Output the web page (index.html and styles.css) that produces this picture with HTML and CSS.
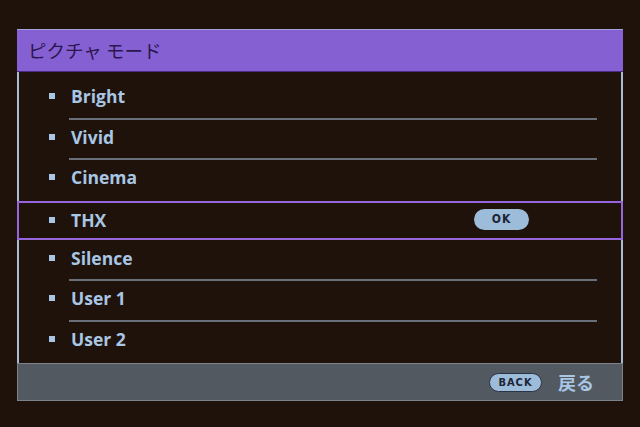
FILE: index.html
```html
<!DOCTYPE html>
<html>
<head>
  <title>ピクチャ モード</title>
  <meta charset="utf-8">
  <link rel="stylesheet" href="styles.css">
</head>
<body>
  <div class="panel">

    <div class="header">ピクチャ モード</div>

    <div class="list">
      <div class="row"><span class="dot"></span><span class="label">Bright</span></div>
      <div class="row"><span class="dot"></span><span class="label">Vivid</span></div>
      <div class="row plain"><span class="dot"></span><span class="label">Cinema</span></div>
      <div class="row selected"><span class="dot"></span><span class="label">THX</span><span class="pill ok">OK</span></div>
      <div class="row"><span class="dot"></span><span class="label">Silence</span></div>
      <div class="row"><span class="dot"></span><span class="label">User 1</span></div>
      <div class="row plain"><span class="dot"></span><span class="label">User 2</span></div>
    </div>

    <div class="footer">
      <span class="pill back">BACK</span>
      <span class="back-text">戻る</span>
    </div>

  </div>
</body>
</html>
```

FILE: styles.css
```css
body {
  margin: 0;
  background: #1e120b;
  font-family: "Open Sans", "Noto Sans", sans-serif;
}
.panel {
  margin: 29px 0 0 17px;
  width: 606px;
}
.header {
  height: 41px;
  border-top: 1px solid #a9a2d6;
  border-bottom: 1px solid #4a2c86;
  background: #8560d2;
  color: #2b1650;
  font-family: "Noto Sans CJK JP", sans-serif;
  font-size: 18.5px;
  line-height: 41px;
  padding-left: 11px;
}
.list {
  height: 284px;
  padding-top: 7px;
  border-left: 2px solid #a9bdd2;
  border-right: 2px solid #a9bdd2;
}
.row {
  box-sizing: border-box;
  height: 40.6px;
  margin: 0 24px 0 50px;
  border-bottom: 2px solid #6a7079;
  display: flex;
  align-items: center;
  padding-bottom: 4px;
  position: relative;
}
.row.plain {
  border-bottom-color: transparent;
}
.dot {
  width: 6px;
  height: 6px;
  background: #a9c6e4;
  margin-left: -20px;
  margin-right: 16px;
}
.label {
  color: #a9c6e4;
  font-weight: bold;
  font-size: 17.5px;
}
.row.selected {
  margin: 0 -2px;
  height: 39.6px;
  padding: 0 0 2px 50px;
  border: 2px solid #9766dc;
}
.pill {
  background: #9dbcd9;
  color: #1c2436;
  border-radius: 11px;
  font-family: "DejaVu Sans Condensed", "DejaVu Sans", sans-serif;
  font-weight: bold;
  text-align: center;
}
.ok {
  position: absolute;
  left: 455px;
  width: 55px;
  height: 21px;
  line-height: 21px;
  font-size: 12px;
  letter-spacing: 1px;
}
.footer {
  height: 36px;
  background: #535961;
  border: 1px solid #7c838c;
  display: flex;
  align-items: center;
  justify-content: flex-end;
  padding-right: 28px;
}
.back {
  width: 53px;
  height: 19px;
  line-height: 17px;
  font-size: 11px;
  letter-spacing: 1px;
  border: 1px solid #2c3444;
  box-sizing: border-box;
}
.back-text {
  margin-left: 16px;
  color: #a9c6e4;
  font-family: "Noto Sans CJK JP", sans-serif;
  font-weight: bold;
  font-size: 18px;
}
```
